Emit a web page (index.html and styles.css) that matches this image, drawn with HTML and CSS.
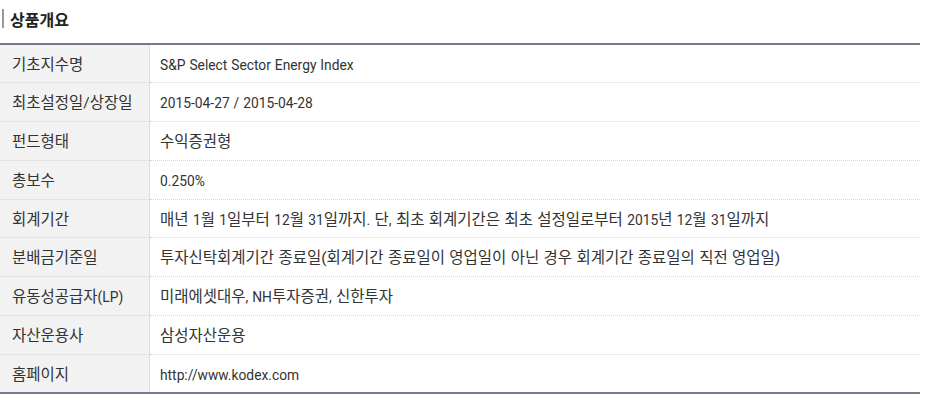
FILE: index.html
```html
<!DOCTYPE html>
<html lang="ko">
<head>
<meta charset="utf-8">
<link rel="stylesheet" href="styles.css">
</head>
<body>
<div class="wrap">
  <h2 class="title">상품개요</h2>
  <table class="info">
    <tr><th>기초지수명</th><td class="en">S&amp;P Select Sector Energy Index</td></tr>
    <tr><th>최초설정일/상장일</th><td class="en">2015-04-27 / 2015-04-28</td></tr>
    <tr><th>펀드형태</th><td>수익증권형</td></tr>
    <tr><th>총보수</th><td class="en">0.250%</td></tr>
    <tr><th>회계기간</th><td>매년 <span class="en">1</span>월 <span class="en">1</span>일부터 <span class="en">12</span>월 <span class="en">31</span>일까지<span class="en">.</span> 단<span class="en">,</span> 최초 회계기간은 최초 설정일로부터 <span class="en">2015</span>년 <span class="en">12</span>월 <span class="en">31</span>일까지</td></tr>
    <tr><th>분배금기준일</th><td>투자신탁회계기간 종료일(회계기간 종료일이 영업일이 아닌 경우 회계기간 종료일의 직전 영업일)</td></tr>
    <tr><th>유동성공급자<span class="en">(LP)</span></th><td>미래에셋대우<span class="en">, NH</span>투자증권<span class="en">,</span> 신한투자</td></tr>
    <tr><th>자산운용사</th><td>삼성자산운용</td></tr>
    <tr class="last"><th>홈페이지</th><td class="en">http://www.kodex.com</td></tr>
  </table>
</div>
</body>
</html>
```
FILE: styles.css
```css
html, body {
  margin: 0;
  padding: 0;
  background: #fff;
}
.wrap {
  width: 920px;
  font-family: Roboto, "Noto Sans CJK KR", sans-serif;
  color: #333;
}
.title {
  margin: 0;
  padding: 9px 0 0 2px;
  height: 34px;
  box-sizing: border-box;
  display: flex;
  align-items: flex-start;
  font-family: "Noto Sans CJK KR", sans-serif;
  font-size: 16px;
  font-weight: bold;
  color: #222;
  line-height: 20px;
}
.title::before {
  content: "";
  display: block;
  width: 2px;
  height: 19px;
  background: #999;
  margin-right: 6px;
}
.info {
  width: 920px;
  border-collapse: collapse;
  border-top: 2px solid #737b88;
  border-bottom: 2px solid #737b88;
  margin-top: 9px;
  font-size: 15.5px;
  line-height: 18px;
  word-spacing: 0.5px;
}
.info tr {
  height: 38.8px;
  border-bottom: 1px dotted #d6d6d6;
}
.info tr.last {
  border-bottom: none;
}
.info th {
  width: 137px;
  text-align: left;
  font-weight: normal;
  background: #f2f2f2;
  border-right: 1px solid #dcdcdc;
  padding: 2px 0 0 12px;
  color: #333;
}
.info td {
  padding: 2px 0 0 10px;
  color: #333;
}
.info .en {
  font-size: 13.8px;
}
```
